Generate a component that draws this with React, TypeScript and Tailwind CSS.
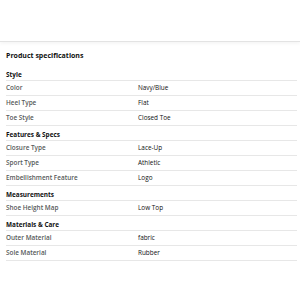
import React from "react";

type Row = { label: string; value: string };
type Section = { title: string; rows: Row[] };

const sections: Section[] = [
  { title: "Style", rows: [
    { label: "Color", value: "Navy/Blue" },
    { label: "Heel Type", value: "Flat" },
    { label: "Toe Style", value: "Closed Toe" },
  ] },
  { title: "Features & Specs", rows: [
    { label: "Closure Type", value: "Lace-Up" },
    { label: "Sport Type", value: "Athletic" },
    { label: "Embellishment Feature", value: "Logo" },
  ] },
  { title: "Measurements", rows: [
    { label: "Shoe Height Map", value: "Low Top" },
  ] },
  { title: "Materials & Care", rows: [
    { label: "Outer Material", value: "fabric" },
    { label: "Sole Material", value: "Rubber" },
  ] },
];

export default function App() {
  return (
    <div className="w-[300px] h-[300px] bg-white overflow-hidden" style={{ fontFamily: '"Open Sans", "Noto Sans", sans-serif' }}>
      <div className="h-[42px] border-b border-[#e3e3e3] shadow-[0_2px_3px_rgba(0,0,0,0.04)]" />
      <div className="h-[24px] flex items-center pl-[6px] pt-[2px]">
        <span className="text-[7px] font-bold text-[#0f1111] leading-none">Product specifications</span>
      </div>
      <div className="pl-[6px] pr-[3px]">
        {sections.map((s) => (
          <div key={s.title}>
            <div className="h-[15px] flex items-end pb-[2px] border-b border-[#e7e7e7]">
              <span className="text-[6.4px] font-bold text-[#0f1111] leading-none">{s.title}</span>
            </div>
            {s.rows.map((r) => (
              <div key={r.label} className="h-[15px] grid grid-cols-[132px_1fr] items-center pt-[1px] border-b border-[#e7e7e7]">
                <span className="text-[6.4px] font-semibold text-[#565959] leading-none">{r.label}</span>
                <span className="text-[6.4px] text-[#0f1111] leading-none">{r.value}</span>
              </div>
            ))}
          </div>
        ))}
      </div>
    </div>
  );
}
